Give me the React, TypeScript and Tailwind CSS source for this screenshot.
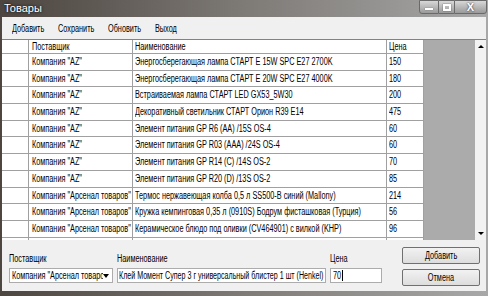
const rows = [
  ['Компания "AZ"', 'Энергосберегающая лампа СТАРТ E 15W SPC E27 2700K', '150'],
  ['Компания "AZ"', 'Энергосберегающая лампа СТАРТ E 20W SPC E27 4000K', '180'],
  ['Компания "AZ"', 'Встраиваемая лампа СТАРТ LED GX53_5W30', '200'],
  ['Компания "AZ"', 'Декоративный светильник СТАРТ Орион R39 E14', '475'],
  ['Компания "AZ"', 'Элемент питания GP R6 (AA) /15S OS-4', '60'],
  ['Компания "AZ"', 'Элемент питания GP R03 (AAA) /24S OS-4', '60'],
  ['Компания "AZ"', 'Элемент питания GP R14 (C) /14S OS-2', '70'],
  ['Компания "AZ"', 'Элемент питания GP R20 (D) /13S OS-2', '85'],
  ['Компания "Арсенал товаров"', 'Термос нержавеющая колба 0,5 л SS500-B синий (Mallony)', '214'],
  ['Компания "Арсенал товаров"', 'Кружка кемпинговая 0,35 л (0910S) Бодрум фисташковая (Турция)', '56'],
  ['Компания "Арсенал товаров"', 'Керамическое блюдо под оливки (CV464901) с вилкой (KHP)', '96'],
  ['', '', ''],
]

const cols = 'grid grid-cols-[27px_104px_254px_37px]'

// narrow system font look: Liberation Sans squeezed horizontally
function T({ children, center = false }: { children: React.ReactNode; center?: boolean }) {
  return (
    <span
      className={`inline-block whitespace-nowrap scale-x-[0.73] ${center ? 'origin-center' : 'origin-left'}`}
    >
      {children}
    </span>
  )
}

function TitleButtons() {
  return (
    <div className="flex h-[14px] self-start">
      <div className="flex w-[20px] items-center justify-center rounded-bl-[3px] border border-[#6a6a6a] bg-gradient-to-b from-[#d8d8d8] to-[#9a9a9a]">
        <div className="mt-[4px] h-[2px] w-[8px] bg-white shadow-[0_0_1px_#333]" />
      </div>
      <div className="flex w-[15px] items-center justify-center border-y border-[#6a6a6a] bg-gradient-to-b from-[#d8d8d8] to-[#9a9a9a]">
        <div className="h-[7px] w-[8px] border-2 border-white shadow-[0_0_1px_#333]" />
      </div>
      <div className="flex w-[33px] items-center justify-center rounded-br-[3px] border border-[#6a6a6a] bg-gradient-to-b from-[#d8d8d8] to-[#9a9a9a] text-[11px] font-bold leading-none text-white [text-shadow:0_0_2px_#222]">
        X
      </div>
    </div>
  )
}

export default function App() {
  return (
    <div
      className="flex h-[296px] w-[488px] flex-col overflow-hidden bg-gradient-to-r from-[#4c4540] via-[#7e7a76] to-[#a8a8a8] text-[10px] text-black"
      style={{ fontFamily: '"Liberation Sans", Arial, sans-serif' }}
    >
      <div className="flex h-[17px] shrink-0 items-start justify-between pl-[4px] pr-[1px]">
        <span className="pt-[2px] text-[11px] leading-[13px] text-white [text-shadow:0_0_3px_#000]">Товары</span>
        <TitleButtons />
      </div>

      <div className="mx-[2px] flex min-h-0 flex-1 flex-col bg-[#f0f0f0]">
        <div className="flex h-[22px] shrink-0 items-center pt-px pl-[10px]">
          <div className="w-[46px]"><T>Добавить</T></div>
          <div className="w-[50px]"><T>Сохранить</T></div>
          <div className="w-[47px]"><T>Обновить</T></div>
          <div className="w-[40px]"><T>Выход</T></div>
        </div>

        <div className="flex h-[201px] shrink-0 border-t border-[#828282] bg-[#ababab]">
          <div className="flex w-[422px] flex-col overflow-hidden bg-[#ababab]">
            <div className={`${cols} h-[14px] shrink-0 bg-white`}>
              <div className="border-r border-b border-[#a0a0a0]" />
              <div className="overflow-hidden border-r border-b border-[#a0a0a0] pl-[3px] leading-[13px]"><T>Поставщик</T></div>
              <div className="overflow-hidden border-r border-b border-[#a0a0a0] pl-[2px] leading-[13px]"><T>Наименование</T></div>
              <div className="overflow-hidden border-r border-b border-[#a0a0a0] pl-[2px] leading-[13px]"><T>Цена</T></div>
            </div>
            {rows.map((r, i) => (
              <div key={i} className={`${cols} h-[16.7px] shrink-0 bg-white`}>
                <div className="border-r border-b border-[#a0a0a0]" />
                <div className="overflow-hidden border-r border-b border-[#a0a0a0] pl-[3px] leading-[16px]"><T>{r[0]}</T></div>
                <div className="overflow-hidden border-r border-b border-[#a0a0a0] pl-[2px] leading-[16px]"><T>{r[1]}</T></div>
                <div className="overflow-hidden border-r border-b border-[#a0a0a0] pl-[2px] leading-[16px]"><T>{r[2]}</T></div>
              </div>
            ))}
          </div>
          <div className="flex-1" />
          <div className="flex w-[11px] flex-col justify-between bg-[#f2f2f2]">
            <div className="flex h-[13px] items-center justify-center">
              <div className="h-0 w-0 border-x-[3px] border-b-[3px] border-x-transparent border-b-black" />
            </div>
            <div className="flex h-[13px] items-center justify-center">
              <div className="h-0 w-0 border-x-[3px] border-t-[3px] border-x-transparent border-t-black" />
            </div>
          </div>
        </div>

        <div className="flex flex-1 items-start pl-[7px] pr-[6px]">
          <div className="mt-[13px] flex flex-col gap-[3px]">
            <span className="leading-[12px]"><T>Поставщик</T></span>
            <div className="flex h-[15px] w-[104px] items-center border border-[#acacac] bg-white pl-[2px] pr-[3px]">
              <div className="w-[92px] overflow-hidden leading-[13px]"><T>Компания "Арсенал товаров"</T></div>
              <div className="ml-auto h-0 w-0 shrink-0 border-x-[3px] border-t-[4px] border-x-transparent border-t-black" />
            </div>
          </div>
          <div className="mt-[13px] ml-[4px] flex flex-col gap-[3px]">
            <span className="leading-[12px]"><T>Наименование</T></span>
            <div className="flex h-[15px] w-[209px] items-center overflow-hidden border border-[#acacac] bg-white pl-px">
              <span className="inline-block origin-left scale-x-[0.71] whitespace-nowrap leading-[13px]">
                Клей Момент Супер 3 г универсальный блистер 1 шт (Henkel)
              </span>
            </div>
          </div>
          <div className="mt-[13px] ml-[4px] flex flex-col gap-[3px]">
            <span className="leading-[12px]"><T>Цена</T></span>
            <div className="flex h-[15px] w-[52px] items-center border border-[#acacac] bg-white pl-[2px]">
              <span className="w-[9px] leading-[13px]"><T>70</T></span>
              <span className="h-[11px] w-px bg-black" />
            </div>
          </div>
          <div className="mt-[7px] ml-auto flex flex-col gap-[5px]">
            <button className="h-[17px] w-[78px] rounded-[2px] border border-[#707070] bg-gradient-to-b from-[#f2f2f2] to-[#dddddd] leading-[14px]">
              <T center>Добавить</T>
            </button>
            <button className="h-[17px] w-[78px] rounded-[2px] border border-[#707070] bg-gradient-to-b from-[#f2f2f2] to-[#dddddd] leading-[14px]">
              <T center>Отмена</T>
            </button>
          </div>
        </div>
      </div>
      <div className="h-[5px] shrink-0" />
    </div>
  )
}
